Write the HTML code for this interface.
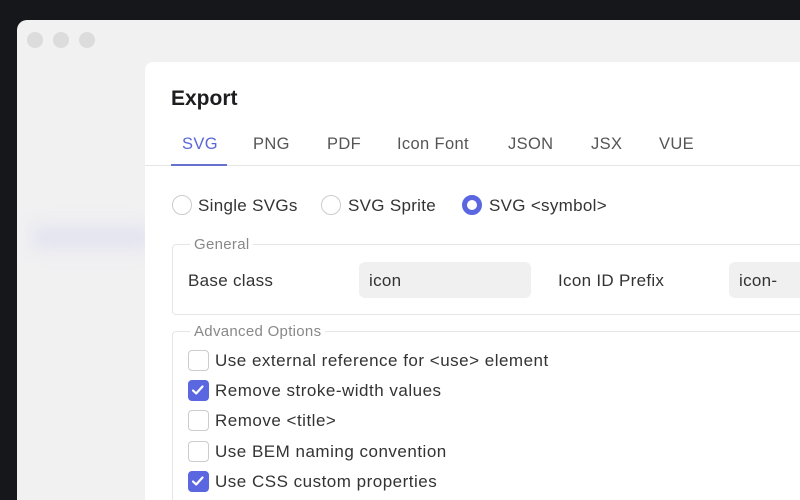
<!DOCTYPE html>
<html><head><style>
*{margin:0;padding:0;box-sizing:border-box}
html,body{width:800px;height:500px;overflow:hidden}
body{background:#15171b;font-family:"Liberation Sans",sans-serif;position:relative}
.win{position:absolute;left:17px;top:20px;width:783px;height:480px;background:#f1f1f2;border-radius:10px 0 0 0;overflow:hidden}
.dot{position:absolute;top:12px;width:16px;height:16px;border-radius:50%;background:#dcdcdd}
.blur{position:absolute;left:15px;top:205px;width:120px;height:25px;background:#e4e4f0;filter:blur(8px)}
.panel{position:absolute;left:145px;top:62px;width:655px;height:438px;background:#fff;border-radius:8px 0 0 0}
.t{position:absolute;white-space:nowrap;color:#333;letter-spacing:0.3px}
.tab{position:absolute;top:135px;font-size:16.5px;color:#555;letter-spacing:0.35px}
.radio{position:absolute;top:195px;width:20px;height:20px;border-radius:50%;border:1.5px solid #ccc;background:#fff}
.fs{position:absolute;left:172px;width:640px;border:1.5px solid #e6e6e6;border-radius:4px}
.leg{position:absolute;font-size:15px;color:#888;background:#fff;padding:0 4px;letter-spacing:0.3px}
.inp{position:absolute;top:262px;height:36px;background:#f0f0f0;border-radius:6px;font-size:17px;color:#333;padding:9px 10px;letter-spacing:0.3px}
.cb{position:absolute;left:188px;width:21px;height:21px;border:1.5px solid #ccc;border-radius:4px;background:#fff}
.cb.on{background:#5a67e0;border-color:#5a67e0}
.lbl{position:absolute;left:215px;font-size:17px;color:#333;white-space:nowrap;letter-spacing:0.5px}
</style></head><body>
<div class="win">
<div class="dot" style="left:10px"></div><div class="dot" style="left:36px"></div><div class="dot" style="left:62px"></div>
<div class="blur"></div>
</div>
<div class="panel"></div>
<div class="t" style="left:171px;top:87px;font-size:21px;font-weight:bold;color:#1d1d1f;letter-spacing:0">Export</div>
<div class="tab" style="left:182px;color:#5a67d8">SVG</div>
<div class="tab" style="left:253px">PNG</div>
<div class="tab" style="left:327px">PDF</div>
<div class="tab" style="left:397px">Icon Font</div>
<div class="tab" style="left:508px">JSON</div>
<div class="tab" style="left:591px">JSX</div>
<div class="tab" style="left:659px">VUE</div>
<div style="position:absolute;left:145px;top:165px;width:655px;height:1px;background:#e4e4e4"></div>
<div style="position:absolute;left:171px;top:164px;width:56px;height:2px;background:#6570cf"></div>

<div class="radio" style="left:172px"></div><div class="t" style="left:198px;top:196px;font-size:17px">Single SVGs</div>
<div class="radio" style="left:321px"></div><div class="t" style="left:348px;top:196px;font-size:17px">SVG Sprite</div>
<div class="radio" style="left:462px;border:5px solid #5a67e0"></div><div class="t" style="left:489px;top:196px;font-size:17px">SVG &lt;symbol&gt;</div>

<div class="fs" style="top:244px;height:71px"></div>
<div class="leg" style="left:190px;top:236px">General</div>
<div class="t" style="left:188px;top:271px;font-size:17px">Base class</div>
<div class="inp" style="left:359px;width:172px">icon</div>
<div class="t" style="left:558px;top:271px;font-size:17px">Icon ID Prefix</div>
<div class="inp" style="left:729px;width:71px;border-radius:6px 0 0 6px">icon-</div>

<div class="fs" style="top:331px;height:180px"></div>
<div class="leg" style="left:190px;top:323px">Advanced Options</div>
<div class="cb" style="top:350px"></div><div class="lbl" style="top:351px">Use external reference for &lt;use&gt; element</div>
<div class="cb on" style="top:380px"><svg width="18" height="18" viewBox="0 0 18 18"><path d="M4 9.5l3.2 3L13.5 5.5" stroke="#fff" stroke-width="2.2" fill="none" stroke-linecap="round" stroke-linejoin="round"/></svg></div><div class="lbl" style="top:381px">Remove stroke-width values</div>
<div class="cb" style="top:410px"></div><div class="lbl" style="top:411px">Remove &lt;title&gt;</div>
<div class="cb" style="top:441px"></div><div class="lbl" style="top:442px">Use BEM naming convention</div>
<div class="cb on" style="top:471px"><svg width="18" height="18" viewBox="0 0 18 18"><path d="M4 9.5l3.2 3L13.5 5.5" stroke="#fff" stroke-width="2.2" fill="none" stroke-linecap="round" stroke-linejoin="round"/></svg></div><div class="lbl" style="top:472px">Use CSS custom properties</div>
</body></html>
